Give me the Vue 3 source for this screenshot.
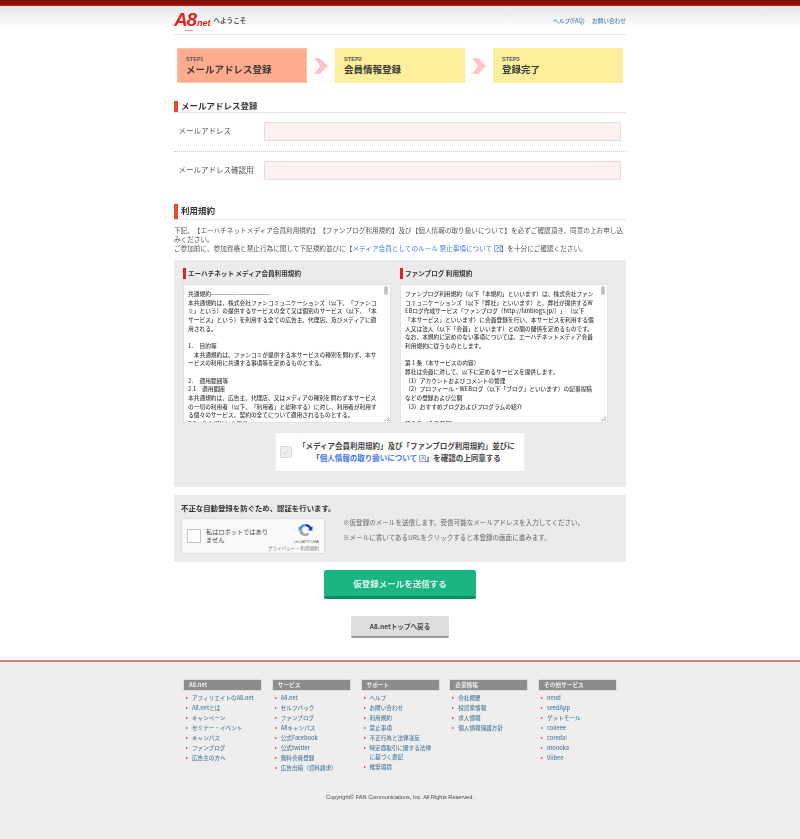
<script setup>
const steps = [
  { no: 'STEP1', title: 'メールアドレス登録', active: true },
  { no: 'STEP2', title: '会員情報登録' },
  { no: 'STEP3', title: '登録完了' },
]
const termsA = `共通規約-----------------------------
本共通規約は、株式会社ファンコミュニケーションズ（以下、「ファンコ
ミ」という）の提供するサービスの全て又は個別のサービス（以下、「本
サービス」という）を利用する全ての広告主、代理店、及びメディアに適
用される。

1．  目的等
　本共通規約は、ファンコミが提供する本サービスの種別を問わず、本サ
ービスの利用に共通する事項等を定めるものとする。

2．  適用範囲等
2.1　適用範囲
本共通規約は、広告主、代理店、又はメディアの種別を問わず本サービス
の一切の利用者（以下、「利用者」と総称する）に対し、利用者が利用す
る個々のサービス、契約の全てについて適用されるものとする。
2.2　他の規約との優劣`
const termsB = `ファンブログ利用規約（以下「本規約」といいます）は、株式会社ファン
コミュニケーションズ（以下「弊社」といいます）と、弊社が提供するW
EBログ作成サービス「ファンブログ（http://fanblogs.jp/）」 （以下
「本サービス」といいます）に会員登録を行い、本サービスを利用する個
人又は法人（以下「会員」といいます）との間の関係を定めるものです。
なお、本規約に定めのない事項については、エーハチネットメディア会員
利用規約に従うものとします。

第 1 条（本サービスの内容）
弊社は会員に対して、以下に定めるサービスを提供します。
（1）アカウントおよびコメントの管理
（2）プロフィール・WEBログ（以下「ブログ」といいます）の記事投稿
などの登録および公開
（3）おすすめブログおよびプログラムの紹介

第 2 条（会員登録）`
const footer = [
  { head: 'A8.net', items: ['アフィリエイトのA8.net', 'A8.netとは', 'キャンペーン', 'セミナー・イベント', 'キャンパス', 'ファンブログ', '広告主の方へ'] },
  { head: 'サービス', items: ['A8.net', 'セルフバック', 'ファンブログ', 'A8キャンパス', '公式Facebook', '公式twitter', '無料会員登録', '広告出稿（資料請求）'] },
  { head: 'サポート', items: ['ヘルプ', 'お問い合わせ', '利用規約', '禁止事項', '不正行為と法律違反', '特定商取引に関する法律に基づく表記', '推奨環境'] },
  { head: '企業情報', items: ['会社概要', '投資家情報', '求人情報', '個人情報保護方針'] },
  { head: 'その他サービス', items: ['nend', 'seedApp', 'ゲットモール', 'colleee', 'coreda!', 'monoka', 'Viibee'] },
]
</script>

<template>
  <div class="page">
    <div class="topbar"></div>
    <div class="headband">
      <header class="wrap header">
        <div class="brand">
          <span class="logo"><span class="logo-a8">A8</span><span class="logo-net">net</span><i class="logo-line"></i></span>
          <span class="welcome">へようこそ</span>
        </div>
        <nav class="toplinks"><a>ヘルプ(FAQ)</a><a>お問い合わせ</a></nav>
      </header>
    </div>

    <main class="wrap">
      <ol class="steps">
        <template v-for="(s, i) in steps" :key="s.no">
          <li class="step" :class="{ active: s.active }">
            <span class="step-no">{{ s.no }}</span>
            <strong class="step-title">{{ s.title }}</strong>
          </li>
          <svg v-if="i < 2" class="chev" viewBox="0 0 14 16"><path d="M0 0h6l8 8-8 8H0l6-8z" fill="#ffc6c8"/></svg>
        </template>
      </ol>

      <h2 class="sec sec-mail">メールアドレス登録</h2>
      <div class="row"><label>メールアドレス</label><div class="input"></div></div>
      <div class="row row-2"><label>メールアドレス確認用</label><div class="input"></div></div>

      <h2 class="sec sec-terms">利用規約</h2>
      <p class="intro">
        下記、【エーハチネットメディア会員利用規約】【ファンブログ利用規約】及び【個人情報の取り扱いについて】を必ずご確認頂き、同意の上お申し込みください。<br>
        ご参加前に、参加資格と禁止行為に関して下記規約並びに【<a>メディア会員としてのルール 禁止事項について<svg class="ext" viewBox="0 0 8 8"><path d="M.5.5h7v7h-7z" fill="#e8f0ff" stroke="#5b86e6" stroke-width=".8"/><path d="M2.5 5.5l3-3M3.5 2.5h2v2" fill="none" stroke="#5b86e6" stroke-width=".7"/></svg></a>】を十分にご確認ください。
      </p>

      <section class="terms">
        <div class="terms-cols">
          <div class="term">
            <h3>エーハチネット メディア会員利用規約</h3>
            <div class="tbox"><div class="ttext">{{ termsA }}</div><i class="thumb"></i><i class="grip"></i></div>
          </div>
          <div class="term">
            <h3>ファンブログ 利用規約</h3>
            <div class="tbox"><div class="ttext">{{ termsB }}</div><i class="thumb"></i><i class="grip"></i></div>
          </div>
        </div>
        <div class="consent">
          <span class="check"><svg viewBox="0 0 12 12"><path d="M2.5 6l2.5 3 4.5-6" fill="none" stroke="#d4d4d4" stroke-width="1.3"/></svg></span>
          <p>「メディア会員利用規約」及び「ファンブログ利用規約」並びに<br>「<a>個人情報の取り扱いについて<svg class="ext" viewBox="0 0 8 8"><path d="M.5.5h7v7h-7z" fill="#e8f0ff" stroke="#5b86e6" stroke-width=".8"/><path d="M2.5 5.5l3-3M3.5 2.5h2v2" fill="none" stroke="#5b86e6" stroke-width=".7"/></svg></a>」を確認の上同意する</p>
        </div>
      </section>

      <section class="auth">
        <h3>不正な自動登録を防ぐため、認証を行います。</h3>
        <div class="auth-body">
          <div class="captcha">
            <span class="cbox"></span>
            <span class="ctext">私はロボットではありません</span>
            <div class="cside">
              <svg class="rc" viewBox="0 0 16 16">
                <path d="M8 1a7 7 0 0 1 6 3.4l1.4-1.2V8H10.6l1.6-1.6A4.8 4.8 0 0 0 8 3.4z" fill="#1c3aa9"/>
                <path d="M8 1a7 7 0 0 0-6.2 3.6L0.6 3.4V8H5.2L3.7 6.5A4.8 4.8 0 0 1 8 3.4z" fill="#4a90e2"/>
                <path d="M1 8.4h4.2a3 3 0 0 0 5.4 1.7l1.7 1.7a5 5 0 0 1-1.6 1.6A7 7 0 0 1 1 8.4z" fill="#ababab"/>
              </svg>
              <span class="rc-name">reCAPTCHA</span>
              <span class="rc-links">プライバシー・利用規約</span>
            </div>
          </div>
          <div class="notes">
            <p>※仮登録のメールを送信します。受信可能なメールアドレスを入力してください。</p>
            <p>※メールに書いてあるURLをクリックすると本登録の画面に進みます。</p>
          </div>
        </div>
      </section>

      <div class="actions">
        <button class="btn-main" type="button">仮登録メールを送信する</button>
        <button class="btn-sub" type="button">A8.netトップへ戻る</button>
      </div>
    </main>

    <footer class="footer">
      <div class="wrap">
        <div class="fcols">
          <div v-for="c in footer" :key="c.head" class="fcol">
            <h4>{{ c.head }}</h4>
            <ul><li v-for="t in c.items" :key="t">{{ t }}</li></ul>
          </div>
        </div>
        <p class="copy">Copyright© FAN Communications, Inc. All Rights Reserved.</p>
      </div>
    </footer>
  </div>
</template>

<style>
html, body { margin: 0; background: #fff; }
</style>

<style scoped>
.page {
  min-height: 100vh;
  display: flex;
  flex-direction: column;
  font-family: "Noto Sans CJK JP", "Liberation Sans", sans-serif;
  color: #444;
  text-spacing-trim: space-all;
  filter: blur(0.4px);
}
.wrap { width: 452px; margin: 0 auto; }
.topbar { height: 6px; background: linear-gradient(#7f0d05, #8f1208 70%, #b8261a); }
.headband { background: linear-gradient(#e6e6e6, #fff 22px); height: 29px; }
.header {
  height: 28px;
  border-bottom: 1px solid #e6e6e6;
  display: flex;
  justify-content: space-between;
  align-items: center;
}
.brand { display: flex; align-items: center; gap: 3px; }
.logo { position: relative; display: flex; align-items: baseline; font-family: "Liberation Sans", sans-serif; font-style: italic; font-weight: 700; color: #e2231a; line-height: 1; margin-top: -2px; }
.logo-a8 { font-size: 19px; letter-spacing: -1.2px; }
.logo-net { font-size: 9px; margin-left: 1px; }
.logo-line { position: absolute; left: 11px; bottom: -2px; width: 8px; height: 1px; background: #ef8f88; }
.welcome { font-size: 6.6px; font-weight: 700; color: #555; }
.toplinks { display: flex; gap: 7px; font-size: 5.7px; font-weight: 500; color: #4f86a8; }

.steps { list-style: none; margin: 13px 0 0; padding: 0 3px; display: flex; align-items: center; gap: 7px; }
.step { width: 130px; height: 35px; box-sizing: border-box; padding: 8px 9px 0; background: #fdee9b; display: flex; flex-direction: column; color: #3a3a3a; }
.step.active { background: #ffab8e; border: 1px solid #ffc2ad; padding: 7px 8px 0; }
.step-no { font-family: "Liberation Sans", sans-serif; font-size: 5.6px; line-height: 7px; font-weight: 700; color: #555; }
.step-title { font-size: 9.5px; line-height: 11px; margin-top: 1px; }
.chev { width: 14px; height: 16px; flex: none; }

.sec { margin: 0; font-size: 8.5px; line-height: 10px; padding-bottom: 2px; color: #333; position: relative; padding-left: 7px; border-bottom: 1px solid #e4e4e4; }
.sec::before { content: ""; position: absolute; left: 0; top: 1px; bottom: 0; width: 3.5px; background: #e2493f; }
.sec-mail { margin-top: 17px; }
.sec-terms { margin-top: 14px; line-height: 12px; padding-bottom: 3px; }
.sec-terms::before { top: 0; bottom: 0; }

.row { display: flex; align-items: center; padding: 9px 5px 10px; }
.row-2 { border-top: 1px dotted #ccc; }
.row label { width: 85px; flex: none; font-size: 7.5px; color: #555; padding-bottom: 2px; margin-left: -0.5px; }
.input { width: 357px; height: 19px; box-sizing: border-box; background: #fdf2f1; border: 1px solid #e4dcdb; border-radius: 1px; }

.intro { margin: 6px 0 0; font-size: 6.64px; line-height: 9px; color: #555; }
.intro a { color: #3f78ef; }
.ext { width: 7px; height: 7px; margin-left: 1.5px; vertical-align: -1px; }

.terms { margin-top: 7px; height: 227px; box-sizing: border-box; background: #ebebeb; padding: 8px 9px 0; }
.terms-cols { display: flex; gap: 9px; }
.term { width: 208px; }
.term h3 { margin: 0 0 5px; font-size: 6.6px; line-height: 11px; color: #333; padding-left: 2px; border-left: 3px solid #d9261c; }
.tbox { height: 139px; position: relative; overflow: hidden; background: #fff; border: 1px solid #e2e2e2; box-sizing: border-box; }
.ttext { padding: 5px 0 0 4px; font-size: 5.72px; line-height: 8.67px; white-space: pre; color: #444; font-weight: 500; }
.thumb { position: absolute; right: 2px; top: 0; width: 4px; height: 9px; margin-top: 1px; background: #c4c4c4; border-radius: 2px; }
.grip { position: absolute; right: 1px; bottom: 1px; width: 5px; height: 5px; background: linear-gradient(135deg, transparent 50%, #bbb 50%, #bbb 62%, transparent 62%, transparent 75%, #bbb 75%); }

.consent { width: 248px; height: 38px; margin: 10px auto 0; background: #fff; position: relative; display: flex; align-items: center; justify-content: center; padding-left: 13px; box-sizing: border-box; }
.consent p { margin: 0; font-size: 7.5px; line-height: 12px; font-weight: 700; text-align: center; color: #444; }
.consent a { color: #3f78ef; }
.check { position: absolute; left: 4px; top: 13px; width: 12px; height: 12px; box-sizing: border-box; background: #eee; border: 1px solid #dcdcdc; border-radius: 1px; display: flex; }
.check svg { width: 100%; height: 100%; }

.auth { margin-top: 8px; height: 67px; box-sizing: border-box; background: #ebebeb; padding: 8px 7px 0; }
.auth h3 { margin: 0; font-size: 7.4px; line-height: 10px; color: #333; }
.auth-body { display: flex; gap: 18px; margin-top: 5px; }
.captcha { width: 144px; height: 36px; box-sizing: border-box; flex: none; background: #f9f9f9; border: 1px solid #dedede; border-radius: 1px; display: flex; align-items: center; padding-left: 5px; position: relative; }
.cbox { width: 14px; height: 14px; box-sizing: border-box; background: #fff; border: 1px solid #c1c1c1; border-radius: 1px; flex: none; }
.ctext { width: 65px; margin-left: 5px; font-size: 6.2px; line-height: 8.5px; color: #444; }
.cside { position: absolute; right: 5px; top: 4px; display: flex; flex-direction: column; align-items: flex-end; }
.rc { width: 15px; height: 15px; margin-right: 6px; }
.rc-name { font-family: "Liberation Sans", sans-serif; font-size: 4.4px; line-height: 6px; color: #666; margin-top: 1px; }
.rc-links { font-size: 4.7px; line-height: 7px; color: #777; white-space: nowrap; }
.notes p { margin: 0 0 6px; font-size: 6.55px; line-height: 9px; color: #666; }

.actions { display: flex; flex-direction: column; align-items: center; }
.actions button { font-family: inherit; border: 0; font-weight: 700; padding: 0; }
.btn-main { margin-top: 8px; width: 152px; height: 29px; background: #1ab582; border-bottom: 3px solid #108a63 !important; border-radius: 2px; color: #e8f8f2; font-size: 8.5px; }
.btn-sub { margin-top: 17px; width: 98px; height: 22px; background: #dedede; border-bottom: 2px solid #999 !important; border-radius: 2px; color: #444; font-size: 6.6px; }

.footer { flex: 1; margin-top: 22px; background: #eee; border-top: 2px solid #cf7d78; }
.fcols { display: flex; gap: 9.75px; padding: 17px 9px 0; height: 115px; box-sizing: border-box; }
.fcol { width: 79px; flex: none; }
.fcol h4 { margin: 0 0 3px; height: 12px; box-sizing: border-box; padding-left: 5px; background: #8c8c8c; border: 1px solid #ddd; font-size: 5.7px; line-height: 10px; font-weight: 700; color: #eee; }
.fcol ul { list-style: none; margin: 0; padding: 0; }
.fcol li { position: relative; padding: 0 5px 0 9px; margin-bottom: 1.33px; font-size: 5.6px; line-height: 8.67px; color: #4f7f9c; font-weight: 500; }
.fcol li::before { content: ""; position: absolute; left: 3px; top: 3px; border-left: 2.5px solid #e2231a; border-top: 1.5px solid transparent; border-bottom: 1.5px solid transparent; }
.copy { margin: 16px 0 0; text-align: center; font-size: 5.6px; line-height: 8px; color: #444; font-family: "Liberation Sans", sans-serif; }
</style>
